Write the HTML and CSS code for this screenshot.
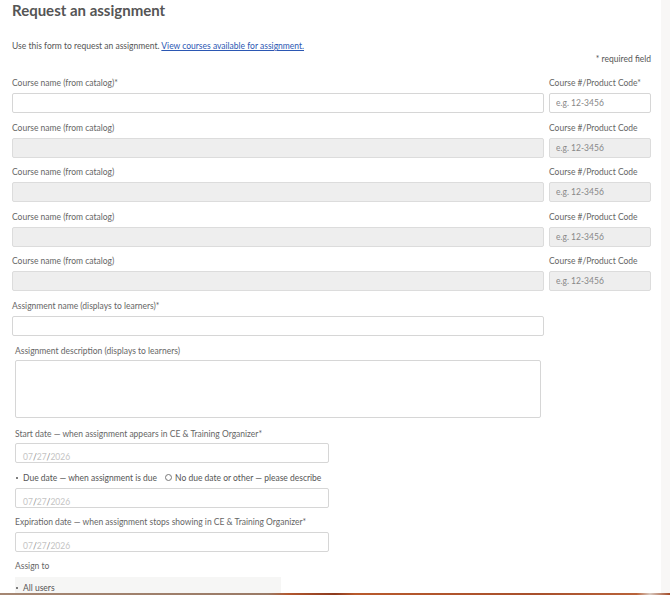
FILE: index.html
```html
<!DOCTYPE html>
<html lang="en">
<head>
  <meta charset="UTF-8" />
  <meta name="viewport" content="width=device-width, initial-scale=1.0"/>
  <title>Request an assignment</title>
  <link rel="stylesheet" href="styles.css">
</head>
<body>
  <div class="page">
    <main class="content">
      <h1>Request an assignment</h1>
      <p class="intro">Use this form to request an assignment. <a href="#">View courses available for assignment.</a></p>
      <p class="required-note">* required field</p>

      <div class="course-row">
        <div class="col-name">
          <label>Course name (from catalog)*</label>
          <input type="text" class="field">
        </div>
        <div class="col-code">
          <label>Course #/Product Code*</label>
          <input type="text" class="field" placeholder="e.g. 12-3456">
        </div>
      </div>

      <div class="course-row">
        <div class="col-name">
          <label>Course name (from catalog)</label>
          <input type="text" class="field disabled">
        </div>
        <div class="col-code">
          <label>Course #/Product Code</label>
          <input type="text" class="field disabled" placeholder="e.g. 12-3456">
        </div>
      </div>

      <div class="course-row">
        <div class="col-name">
          <label>Course name (from catalog)</label>
          <input type="text" class="field disabled">
        </div>
        <div class="col-code">
          <label>Course #/Product Code</label>
          <input type="text" class="field disabled" placeholder="e.g. 12-3456">
        </div>
      </div>

      <div class="course-row">
        <div class="col-name">
          <label>Course name (from catalog)</label>
          <input type="text" class="field disabled">
        </div>
        <div class="col-code">
          <label>Course #/Product Code</label>
          <input type="text" class="field disabled" placeholder="e.g. 12-3456">
        </div>
      </div>

      <div class="course-row">
        <div class="col-name">
          <label>Course name (from catalog)</label>
          <input type="text" class="field disabled">
        </div>
        <div class="col-code">
          <label>Course #/Product Code</label>
          <input type="text" class="field disabled" placeholder="e.g. 12-3456">
        </div>
      </div>

      <div class="group">
        <label>Assignment name (displays to learners)*</label>
        <input type="text" class="field wide">
      </div>

      <div class="group indented gap-10">
        <label class="tight">Assignment description (displays to learners)</label>
        <textarea class="field description"></textarea>
      </div>

      <div class="group indented">
        <label class="tight">Start date — when assignment appears in CE &amp; Training Organizer*</label>
        <div class="date-field"><span>07</span><b>/</b><span>27</span><b>/</b><span>2026</span></div>
      </div>

      <div class="group indented gap-8">
        <div class="radio-row">
          <span class="option"><span class="dot"></span>Due date — when assignment is due</span>
          <span class="option"><span class="circle"></span>No due date or other — please describe</span>
        </div>
        <div class="date-field"><span>07</span><b>/</b><span>27</span><b>/</b><span>2026</span></div>
      </div>

      <div class="group indented gap-8">
        <label>Expiration date — when assignment stops showing in CE &amp; Training Organizer*</label>
        <div class="date-field"><span>07</span><b>/</b><span>27</span><b>/</b><span>2026</span></div>
      </div>

      <div class="group indented">
        <label class="assign-label">Assign to</label>
        <div class="assign-box">
          <span class="option"><span class="dot"></span>All users</span>
        </div>
      </div>
    </main>
    <aside class="side-strip"></aside>
  </div>
  <div class="bottom-band"></div>
</body>
</html>
```

FILE: styles.css
```css
body {
  font-family: Lato, 'Open Sans', sans-serif;
  background: #fff;
  color: #666;
  margin: 0;
  padding: 0;
  font-size: 8.5px;
  height: 595px;
  overflow: hidden;
}

.page {
  display: flex;
  min-height: 595px;
}

.content {
  flex: 1;
  padding: 0 10px 0 12px;
  background: #fff;
}

.side-strip {
  width: 9px;
  background: #f8f7f6;
}

h1 {
  margin: 0;
  font-size: 15px;
  line-height: 20px;
  font-weight: 700;
  color: #555;
}

.intro {
  margin: 20px 0 0;
  line-height: 12px;
  color: #555;
}

.intro a {
  color: #2b57b3;
  text-decoration: underline;
}

.required-note {
  margin: 1px 0 12px;
  line-height: 12px;
  text-align: right;
  color: #555;
}

label {
  display: block;
  line-height: 12px;
  margin-bottom: 4px;
  color: #666;
}

label.tight {
  margin-bottom: 3px;
}

.course-row {
  display: flex;
  gap: 5px;
  margin-bottom: 8.5px;
}

.col-name {
  width: 532px;
}

.col-code {
  width: 102px;
}

.field {
  display: block;
  box-sizing: border-box;
  width: 100%;
  height: 20px;
  margin: 0;
  padding: 0 6px;
  border: 1px solid #d6d6d6;
  border-radius: 2px;
  background: #fff;
  font-family: Lato, sans-serif;
  font-size: 8.5px;
  color: #555;
  outline: none;
}

.field::placeholder {
  color: #888;
}

.field.disabled {
  background: #eeeeee;
  border-color: #dcdcdc;
}

.group {
  margin-bottom: 9px;
}

.group.gap-10 {
  margin-bottom: 10px;
}

.group.gap-8 {
  margin-bottom: 8px;
}

.wide {
  width: 532px;
}

.indented {
  padding-left: 3px;
}

.description {
  width: 526px;
  height: 58px;
  resize: none;
}

.date-field {
  box-sizing: border-box;
  width: 314px;
  height: 20px;
  border: 1px solid #d6d6d6;
  border-radius: 2px;
  padding: 8px 0 0 7px;
  line-height: 10px;
  color: #c4c4c4;
  font-size: 8.5px;
  overflow: hidden;
}

.date-field b {
  font-weight: 400;
  color: #8a8a8a;
}

.radio-row {
  display: flex;
  gap: 8px;
  line-height: 12px;
  margin-bottom: 4px;
}

.option {
  display: inline-flex;
  align-items: center;
  color: #555;
}

.dot {
  width: 2px;
  height: 2px;
  border-radius: 50%;
  background: #555;
  margin: 0 5px 0 1px;
}

.circle {
  box-sizing: border-box;
  width: 7px;
  height: 7px;
  border-radius: 50%;
  border: 1px solid #777;
  margin-right: 3px;
}

.assign-label {
  margin-bottom: 5px;
}

.assign-box {
  width: 266px;
  height: 20px;
  background: #f6f6f5;
  padding-top: 3px;
  box-sizing: border-box;
  line-height: 12px;
}

/* strip of the overlay peeking in at the bottom edge */
.bottom-band {
  position: fixed;
  left: 0;
  right: 0;
  bottom: 0;
  height: 2px;
  background: linear-gradient(90deg, #a58773 0%, #9a7a66 40%, #b3582f 43%, #8c3a1e 50%, #b95a2c 53%, #a8502c 80%, #b9633a 95%, #d8c9c0 97%, #a34a26 100%);
}
```
